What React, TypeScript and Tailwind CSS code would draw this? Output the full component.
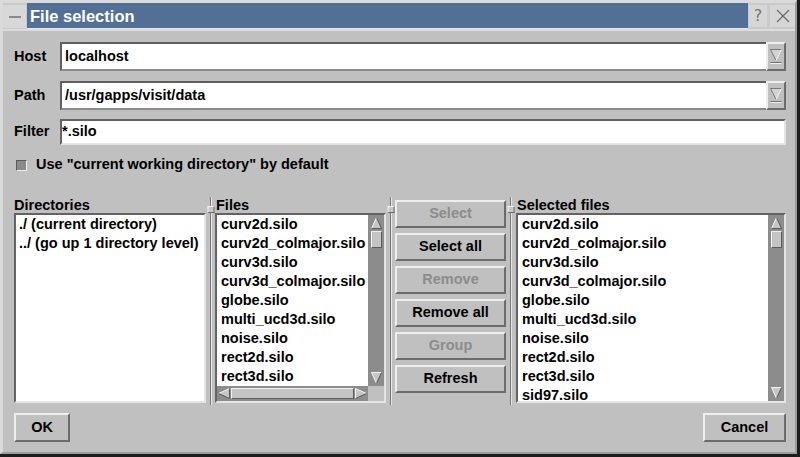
import React from "react";

const raised =
  "border-2 border-t-[#eeeeee] border-l-[#eeeeee] border-b-[#6b6b6b] border-r-[#6b6b6b]";
const sunken =
  "border-2 border-t-[#636363] border-l-[#636363] border-b-[#e4e4e4] border-r-[#e4e4e4]";

function UpArrow() {
  return (
    <svg width="11" height="12" viewBox="0 0 11 12">
      <polygon points="5.5,0.5 10.5,11.5 0.5,11.5" fill="#c6c6c6" />
      <line x1="0.5" y1="11.5" x2="5.5" y2="0.5" stroke="#f4f4f4" />
      <line x1="5.5" y1="0.5" x2="10.5" y2="11.5" stroke="#5a5a5a" />
      <line x1="0.5" y1="11.5" x2="10.5" y2="11.5" stroke="#5a5a5a" />
    </svg>
  );
}
function DownArrow() {
  return (
    <svg width="11" height="12" viewBox="0 0 11 12">
      <polygon points="0.5,0.5 10.5,0.5 5.5,11.5" fill="#c6c6c6" />
      <line x1="0.5" y1="0.5" x2="10.5" y2="0.5" stroke="#f4f4f4" />
      <line x1="0.5" y1="0.5" x2="5.5" y2="11.5" stroke="#f4f4f4" />
      <line x1="10.5" y1="0.5" x2="5.5" y2="11.5" stroke="#5a5a5a" />
    </svg>
  );
}
function LeftArrow() {
  return (
    <svg width="12" height="11" viewBox="0 0 12 11">
      <polygon points="0.5,5.5 11.5,0.5 11.5,10.5" fill="#c6c6c6" />
      <line x1="0.5" y1="5.5" x2="11.5" y2="0.5" stroke="#f4f4f4" />
      <line x1="0.5" y1="5.5" x2="11.5" y2="10.5" stroke="#5a5a5a" />
      <line x1="11.5" y1="0.5" x2="11.5" y2="10.5" stroke="#5a5a5a" />
    </svg>
  );
}
function RightArrow() {
  return (
    <svg width="12" height="11" viewBox="0 0 12 11">
      <polygon points="0.5,0.5 11.5,5.5 0.5,10.5" fill="#c6c6c6" />
      <line x1="0.5" y1="0.5" x2="0.5" y2="10.5" stroke="#f4f4f4" />
      <line x1="0.5" y1="0.5" x2="11.5" y2="5.5" stroke="#f4f4f4" />
      <line x1="0.5" y1="10.5" x2="11.5" y2="5.5" stroke="#5a5a5a" />
    </svg>
  );
}

function DropIcon() {
  return (
    <svg width="14" height="18" viewBox="0 0 14 18">
      <polygon points="1.5,1.5 12.5,1.5 7,12.5" fill="#d2d2d2" />
      <line x1="1.5" y1="1.5" x2="12.5" y2="1.5" stroke="#7a7a7a" />
      <line x1="1.5" y1="1.5" x2="7" y2="12.5" stroke="#7a7a7a" />
      <line x1="12.5" y1="1.5" x2="7" y2="12.5" stroke="#f0f0f0" />
      <line x1="1.5" y1="14.5" x2="12.5" y2="14.5" stroke="#6e6e6e" />
      <line x1="1.5" y1="15.5" x2="12.5" y2="15.5" stroke="#f0f0f0" />
    </svg>
  );
}

function VScroll() {
  return (
    <div className="w-[16px] bg-[#8c8c8c] flex flex-col items-center pt-[2px] pb-[2px]">
      <UpArrow />
      <div className="mt-[2px] w-[11px] h-[17px] bg-[#c4c4c4] border border-t-[#f2f2f2] border-l-[#f2f2f2] border-b-[#5c5c5c] border-r-[#5c5c5c]" />
      <div className="flex-1" />
      <DownArrow />
    </div>
  );
}

function Combo({ value }: { value: string }) {
  return (
    <div className="flex-1 h-[29px] flex">
      <div className="flex-1 bg-white border-t-2 border-l-2 border-b-2 border-t-[#5f5f5f] border-l-[#5f5f5f] border-b-[#8a8a8a] flex items-center pl-[3px] text-[14.5px] font-bold text-black">
        {value}
      </div>
      <div className={`w-[20px] bg-[#c0c0c0] flex items-center justify-center ${raised}`}>
        <DropIcon />
      </div>
    </div>
  );
}

function Btn({ label, disabled, className }: { label: string; disabled?: boolean; className?: string }) {
  return (
    <div
      className={`bg-[#c0c0c0] flex items-center justify-center text-[14.5px] font-bold ${raised} ${
        disabled ? "text-[#8c8c8c]" : "text-black"
      } ${className ?? ""}`}
    >
      {label}
    </div>
  );
}

function Splitter({ w }: { w: string }) {
  return (
    <div className={`relative ${w} flex justify-center`}>
      <div className="w-px h-full bg-[#7a7a7a]" />
      <div className="w-px h-full bg-[#e6e6e6]" />
      <div className="absolute top-[9px] left-1/2 -translate-x-1/2 w-[7px] h-[7px] bg-[#c8c8c8] border border-t-[#f4f4f4] border-l-[#f4f4f4] border-b-[#6a6a6a] border-r-[#6a6a6a]" />
    </div>
  );
}

const files = [
  "curv2d.silo",
  "curv2d_colmajor.silo",
  "curv3d.silo",
  "curv3d_colmajor.silo",
  "globe.silo",
  "multi_ucd3d.silo",
  "noise.silo",
  "rect2d.silo",
  "rect3d.silo",
];
const selected = [...files, "sid97.silo"];

export default function App() {
  return (
    <div className="w-[800px] h-[457px] bg-[#1c1c1c] overflow-hidden font-['Liberation_Sans',Arial,sans-serif] text-black">
      <div className="w-[797px] h-[454px] bg-[#c0c0c0] border-t-[3px] border-l-[3px] border-t-[#dadada] border-l-[#dadada] border-r-2 border-b-2 border-r-[#9c9c9c] border-b-[#9c9c9c] flex flex-col">
        {/* Title bar */}
        <div className="h-[26px] flex bg-[#cacaca]">
          <div className="w-[23px] mt-[2px] h-[23px] bg-[#d8d8d8] flex items-center justify-center">
            <div className="w-[12px] h-[2px] bg-[#8a8a8a]" />
          </div>
          <div className="ml-[1px] w-[721px] bg-[#526f96] text-white text-[16.5px] font-bold leading-[26px] pl-[3px] border-b border-b-[#e8e8e8]">
            File selection
          </div>
          <div className="ml-[1px] w-[18px] mt-[2px] h-[22px] bg-[#d6d6d6] flex items-center justify-center text-[16px] text-[#767676] font-['DejaVu_Sans',sans-serif]">
            ?
          </div>
          <div className="ml-[3px] w-[25px] mt-[2px] h-[22px] bg-[#d6d6d6] flex items-center justify-center">
            <svg width="14" height="14" viewBox="0 0 14 14">
              <line x1="1" y1="1" x2="13" y2="13" stroke="#6e6e6e" strokeWidth="1.3" />
              <line x1="13" y1="1" x2="1" y2="13" stroke="#6e6e6e" strokeWidth="1.3" />
            </svg>
          </div>
        </div>
        <div className="h-[2px] bg-[#dcdcdc]" />

        {/* Body */}
        <div className="flex-1 flex flex-col pl-[11px] pr-[9px] pt-[11px]">
          <div className="h-[29px] flex items-center">
            <div className="w-[46px] text-[14.5px] font-bold">Host</div>
            <Combo value="localhost" />
          </div>
          <div className="mt-[10px] h-[29px] flex items-center">
            <div className="w-[46px] text-[14.5px] font-bold">Path</div>
            <Combo value="/usr/gapps/visit/data" />
          </div>
          <div className="mt-[9px] h-[26px] flex items-center">
            <div className="w-[46px] text-[14.5px] font-bold">Filter</div>
            <div className={`flex-1 h-full bg-white flex items-center text-[14.5px] font-bold ${sunken}`}>*.silo</div>
          </div>
          <div className="mt-[12px] h-[16px] flex items-center">
            <div className="ml-[2px] w-[11px] h-[11px] bg-[#8a8a8a] border border-t-[#5a5a5a] border-l-[#5a5a5a] border-b-[#eeeeee] border-r-[#eeeeee]" />
            <div className="ml-[9px] text-[14.5px] font-bold">Use "current working directory" by default</div>
          </div>

          {/* Lists */}
          <div className="mt-[24px] h-[208px] flex">
            <div className="w-[192px] flex flex-col">
              <div className="h-[16px] leading-[16px] text-[14.5px] font-bold">Directories</div>
              <div className={`h-[190px] bg-white ${sunken} pl-[3px] text-[14.5px] font-bold leading-[19px] whitespace-nowrap`}>
                <div>./ (current directory)</div>
                <div>../ (go up 1 directory level)</div>
              </div>
            </div>
            <Splitter w="w-[9px]" />
            <div className="w-[171px] flex flex-col">
              <div className="h-[16px] leading-[16px] text-[14.5px] font-bold pl-[1px]">Files</div>
              <div className={`h-[190px] ${sunken} flex flex-col`}>
                <div className="h-[171px] flex">
                  <div className="flex-1 bg-white overflow-hidden pl-[4px] text-[14.5px] font-bold leading-[19px] whitespace-nowrap">
                    {files.map((f) => (
                      <div key={f}>{f}</div>
                    ))}
                  </div>
                  <VScroll />
                </div>
                <div className="h-[15px] flex">
                  <div className="flex-1 bg-[#8c8c8c] flex items-center px-[1px]">
                    <LeftArrow />
                    <div className="flex-1 mx-[1px] h-[11px] bg-[#c4c4c4] border border-t-[#f2f2f2] border-l-[#f2f2f2] border-b-[#5c5c5c] border-r-[#5c5c5c]" />
                    <RightArrow />
                  </div>
                  <div className="w-[16px] bg-[#c0c0c0]" />
                </div>
              </div>
            </div>
            <Splitter w="w-[9px]" />
            <div className="w-[111px] flex flex-col gap-[5px] pt-[3px]">
              <Btn label="Select" disabled className="h-[28px]" />
              <Btn label="Select all" className="h-[28px]" />
              <Btn label="Remove" disabled className="h-[28px]" />
              <Btn label="Remove all" className="h-[28px]" />
              <Btn label="Group" disabled className="h-[28px]" />
              <Btn label="Refresh" className="h-[28px]" />
            </div>
            <Splitter w="w-[10px]" />
            <div className="w-[270px] flex flex-col">
              <div className="h-[16px] leading-[16px] text-[14.5px] font-bold pl-[1px]">Selected files</div>
              <div className={`h-[190px] ${sunken} flex`}>
                <div className="flex-1 bg-white overflow-hidden pl-[4px] text-[14.5px] font-bold leading-[19px] whitespace-nowrap">
                  {selected.map((f) => (
                    <div key={f}>{f}</div>
                  ))}
                </div>
                <VScroll />
              </div>
            </div>
          </div>

          {/* Bottom buttons */}
          <div className="mt-[8px] h-[29px] flex justify-between">
            <Btn label="OK" className="w-[56px] h-[29px]" />
            <Btn label="Cancel" className="w-[83px] h-[29px]" />
          </div>
        </div>
      </div>
    </div>
  );
}
